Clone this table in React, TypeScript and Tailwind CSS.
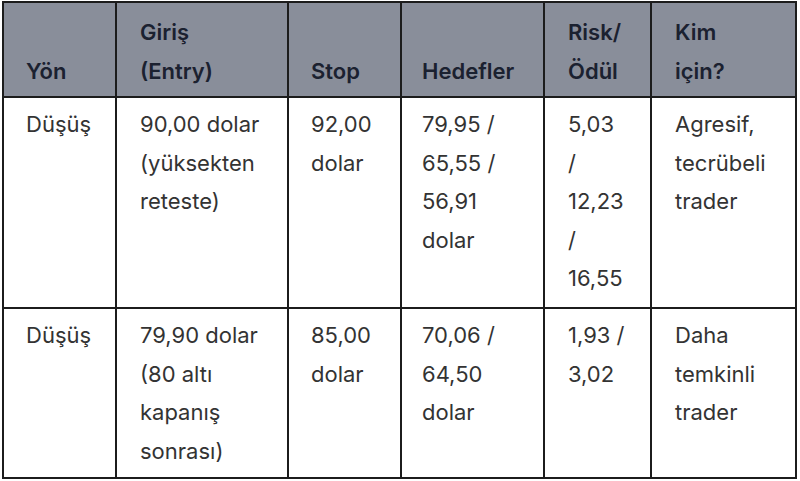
const head = [
  { lines: ["Yön"], pl: "pl-[22px]" },
  { lines: ["Giriş", "(Entry)"], pl: "pl-[23px]" },
  { lines: ["Stop"], pl: "pl-[22px]" },
  { lines: ["Hedefler"], pl: "pl-[20px]" },
  { lines: ["Risk/", "Ödül"], pl: "pl-[23px]" },
  { lines: ["Kim", "için?"], pl: "pl-[23px]" },
];

const rows = [
  {
    h: "h-[211px]",
    cells: [
      ["Düşüş"],
      ["90,00 dolar", "(yüksekten", "reteste)"],
      ["92,00", "dolar"],
      ["79,95 /", "65,55 /", "56,91", "dolar"],
      ["5,03", "/", "12,23", "/", "16,55"],
      ["Agresif,", "tecrübeli", "trader"],
    ],
  },
  {
    h: "h-[170px]",
    cells: [
      ["Düşüş"],
      ["79,90 dolar", "(80 altı", "kapanış", "sonrası)"],
      ["85,00", "dolar"],
      ["70,06 /", "64,50", "dolar"],
      ["1,93 /", "3,02"],
      ["Daha", "temkinli", "trader"],
    ],
  },
];

const widths = ["w-[113px]", "w-[172px]", "w-[113px]", "w-[143px]", "w-[107px]", "w-[145px]"];

export default function App() {
  return (
    <div className="w-[800px] h-[481px] bg-white pl-[2px] pt-[1px] overflow-hidden font-['Inter',sans-serif]">
      <table className="w-[793px] table-fixed border-collapse border-2 border-[#1c1c1c] text-[22px] leading-[38.5px]">
        <colgroup>
          {widths.map((w, i) => (
            <col key={i} className={w} />
          ))}
        </colgroup>
        <thead>
          <tr className="h-[95px] bg-[#898e9a]">
            {head.map((c, i) => (
              <th
                key={i}
                className={`border-2 border-[#1c1c1c] align-bottom text-left font-semibold text-[#1b2130] pb-[6px] pr-1 ${c.pl}`}
              >
                {c.lines.map((l, j) => (
                  <div key={j}>{l}</div>
                ))}
              </th>
            ))}
          </tr>
        </thead>
        <tbody>
          {rows.map((r, ri) => (
            <tr key={ri} className={r.h}>
              {r.cells.map((c, i) => (
                <td
                  key={i}
                  className={`border-2 border-[#1c1c1c] align-top text-[#333333] pt-[7px] pr-1 ${head[i].pl}`}
                >
                  {c.map((l, j) => (
                    <div key={j}>{l}</div>
                  ))}
                </td>
              ))}
            </tr>
          ))}
        </tbody>
      </table>
    </div>
  );
}
